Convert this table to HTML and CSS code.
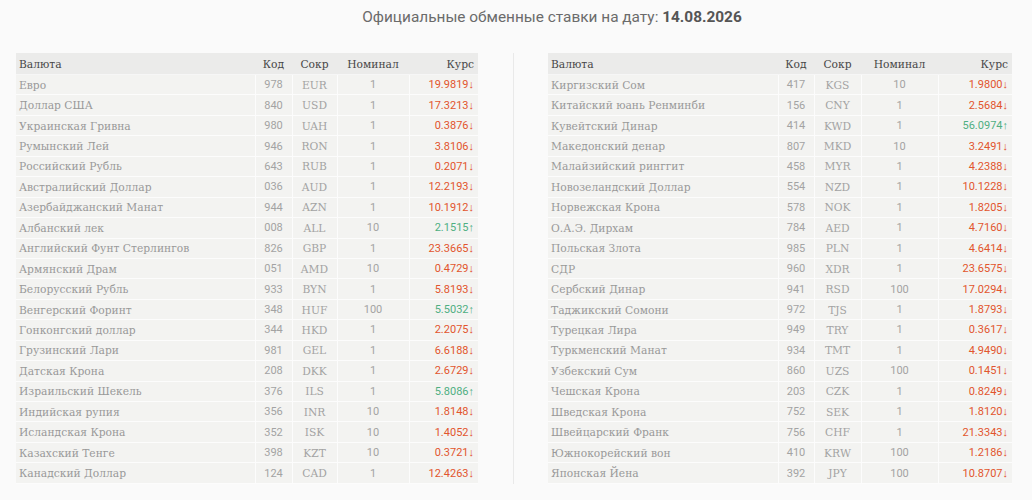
FILE: index.html
```html
<!DOCTYPE html>
<html lang="ru">
<head>
<meta charset="utf-8">
<title>Официальные обменные ставки</title>
<link rel="stylesheet" href="styles.css">
</head>
<body>
<h1 class="title">Официальные обменные ставки на дату: <b>14.08.2026</b></h1>
<div class="tables">
  <div class="col col-left">
    <table class="rates rates-left">
      <colgroup><col class="c-name"><col class="c-code"><col class="c-abbr"><col class="c-nom"><col class="c-rate"></colgroup>
      <thead><tr><th class="name">Валюта</th><th>Код</th><th>Сокр</th><th>Номинал</th><th class="rate">Курс</th></tr></thead>
      <tbody>
        <tr><td class="name">Евро</td><td class="num">978</td><td class="abbr">EUR</td><td class="num">1</td><td class="rate down">19.9819↓</td></tr>
        <tr><td class="name">Доллар США</td><td class="num">840</td><td class="abbr">USD</td><td class="num">1</td><td class="rate down">17.3213↓</td></tr>
        <tr><td class="name">Украинская Гривна</td><td class="num">980</td><td class="abbr">UAH</td><td class="num">1</td><td class="rate down">0.3876↓</td></tr>
        <tr><td class="name">Румынский Лей</td><td class="num">946</td><td class="abbr">RON</td><td class="num">1</td><td class="rate down">3.8106↓</td></tr>
        <tr><td class="name">Российский Рубль</td><td class="num">643</td><td class="abbr">RUB</td><td class="num">1</td><td class="rate down">0.2071↓</td></tr>
        <tr><td class="name">Австралийский Доллар</td><td class="num">036</td><td class="abbr">AUD</td><td class="num">1</td><td class="rate down">12.2193↓</td></tr>
        <tr><td class="name">Азербайджанский Манат</td><td class="num">944</td><td class="abbr">AZN</td><td class="num">1</td><td class="rate down">10.1912↓</td></tr>
        <tr><td class="name">Албанский лек</td><td class="num">008</td><td class="abbr">ALL</td><td class="num">10</td><td class="rate up">2.1515↑</td></tr>
        <tr><td class="name">Английский Фунт Стерлингов</td><td class="num">826</td><td class="abbr">GBP</td><td class="num">1</td><td class="rate down">23.3665↓</td></tr>
        <tr><td class="name">Армянский Драм</td><td class="num">051</td><td class="abbr">AMD</td><td class="num">10</td><td class="rate down">0.4729↓</td></tr>
        <tr><td class="name">Белорусский Рубль</td><td class="num">933</td><td class="abbr">BYN</td><td class="num">1</td><td class="rate down">5.8193↓</td></tr>
        <tr><td class="name">Венгерский Форинт</td><td class="num">348</td><td class="abbr">HUF</td><td class="num">100</td><td class="rate up">5.5032↑</td></tr>
        <tr><td class="name">Гонконгский доллар</td><td class="num">344</td><td class="abbr">HKD</td><td class="num">1</td><td class="rate down">2.2075↓</td></tr>
        <tr><td class="name">Грузинский Лари</td><td class="num">981</td><td class="abbr">GEL</td><td class="num">1</td><td class="rate down">6.6188↓</td></tr>
        <tr><td class="name">Датская Крона</td><td class="num">208</td><td class="abbr">DKK</td><td class="num">1</td><td class="rate down">2.6729↓</td></tr>
        <tr><td class="name">Израильский Шекель</td><td class="num">376</td><td class="abbr">ILS</td><td class="num">1</td><td class="rate up">5.8086↑</td></tr>
        <tr><td class="name">Индийская рупия</td><td class="num">356</td><td class="abbr">INR</td><td class="num">10</td><td class="rate down">1.8148↓</td></tr>
        <tr><td class="name">Исландская Крона</td><td class="num">352</td><td class="abbr">ISK</td><td class="num">10</td><td class="rate down">1.4052↓</td></tr>
        <tr><td class="name">Казахский Тенге</td><td class="num">398</td><td class="abbr">KZT</td><td class="num">10</td><td class="rate down">0.3721↓</td></tr>
        <tr><td class="name">Канадский Доллар</td><td class="num">124</td><td class="abbr">CAD</td><td class="num">1</td><td class="rate down">12.4263↓</td></tr>
      </tbody>
    </table>
  </div>
  <div class="col col-right">
    <table class="rates rates-right">
      <colgroup><col class="c-name"><col class="c-code"><col class="c-abbr"><col class="c-nom"><col class="c-rate"></colgroup>
      <thead><tr><th class="name">Валюта</th><th>Код</th><th>Сокр</th><th>Номинал</th><th class="rate">Курс</th></tr></thead>
      <tbody>
        <tr><td class="name">Киргизский Сом</td><td class="num">417</td><td class="abbr">KGS</td><td class="num">10</td><td class="rate down">1.9800↓</td></tr>
        <tr><td class="name">Китайский юань Ренминби</td><td class="num">156</td><td class="abbr">CNY</td><td class="num">1</td><td class="rate down">2.5684↓</td></tr>
        <tr><td class="name">Кувейтский Динар</td><td class="num">414</td><td class="abbr">KWD</td><td class="num">1</td><td class="rate up">56.0974↑</td></tr>
        <tr><td class="name">Македонский денар</td><td class="num">807</td><td class="abbr">MKD</td><td class="num">10</td><td class="rate down">3.2491↓</td></tr>
        <tr><td class="name">Малайзийский ринггит</td><td class="num">458</td><td class="abbr">MYR</td><td class="num">1</td><td class="rate down">4.2388↓</td></tr>
        <tr><td class="name">Новозеландский Доллар</td><td class="num">554</td><td class="abbr">NZD</td><td class="num">1</td><td class="rate down">10.1228↓</td></tr>
        <tr><td class="name">Норвежская Крона</td><td class="num">578</td><td class="abbr">NOK</td><td class="num">1</td><td class="rate down">1.8205↓</td></tr>
        <tr><td class="name">О.А.Э. Дирхам</td><td class="num">784</td><td class="abbr">AED</td><td class="num">1</td><td class="rate down">4.7160↓</td></tr>
        <tr><td class="name">Польская Злота</td><td class="num">985</td><td class="abbr">PLN</td><td class="num">1</td><td class="rate down">4.6414↓</td></tr>
        <tr><td class="name">СДР</td><td class="num">960</td><td class="abbr">XDR</td><td class="num">1</td><td class="rate down">23.6575↓</td></tr>
        <tr><td class="name">Сербский Динар</td><td class="num">941</td><td class="abbr">RSD</td><td class="num">100</td><td class="rate down">17.0294↓</td></tr>
        <tr><td class="name">Таджикский Сомони</td><td class="num">972</td><td class="abbr">TJS</td><td class="num">1</td><td class="rate down">1.8793↓</td></tr>
        <tr><td class="name">Турецкая Лира</td><td class="num">949</td><td class="abbr">TRY</td><td class="num">1</td><td class="rate down">0.3617↓</td></tr>
        <tr><td class="name">Туркменский Манат</td><td class="num">934</td><td class="abbr">TMT</td><td class="num">1</td><td class="rate down">4.9490↓</td></tr>
        <tr><td class="name">Узбекский Сум</td><td class="num">860</td><td class="abbr">UZS</td><td class="num">100</td><td class="rate down">0.1451↓</td></tr>
        <tr><td class="name">Чешская Крона</td><td class="num">203</td><td class="abbr">CZK</td><td class="num">1</td><td class="rate down">0.8249↓</td></tr>
        <tr><td class="name">Шведская Крона</td><td class="num">752</td><td class="abbr">SEK</td><td class="num">1</td><td class="rate down">1.8120↓</td></tr>
        <tr><td class="name">Швейцарский Франк</td><td class="num">756</td><td class="abbr">CHF</td><td class="num">1</td><td class="rate down">21.3343↓</td></tr>
        <tr><td class="name">Южнокорейский вон</td><td class="num">410</td><td class="abbr">KRW</td><td class="num">100</td><td class="rate down">1.2186↓</td></tr>
        <tr><td class="name">Японская Йена</td><td class="num">392</td><td class="abbr">JPY</td><td class="num">100</td><td class="rate down">10.8707↓</td></tr>
      </tbody>
    </table>
  </div>
</div>
</body>
</html>
```
FILE: styles.css
```css
html, body {
  margin: 0;
  padding: 0;
  background: #fafafa;
}
body {
  padding-top: 7px;
  font-family: "DejaVu Serif Condensed", "DejaVu Serif", serif;
}
.title {
  margin: 0 0 26px 0;
  padding-left: 72px;
  text-align: center;
  font-family: Roboto, "Noto Sans", sans-serif;
  font-stretch: normal;
  font-weight: 400;
  font-size: 15.4px;
  line-height: 20px;
  color: #6b6b6b;
}
.title b {
  font-weight: 700;
  color: #555;
}
.tables {
  display: flex;
  padding-left: 16px;
}
.col-left {
  padding-right: 35px;
}
.col-right {
  border-left: 1px solid #e9e9e9;
  padding-left: 34px;
}
.rates {
  border-collapse: collapse;
  table-layout: fixed;
  font-size: 11.9px;
  font-stretch: condensed;
}
.rates-left { width: 462px; }
.rates-right { width: 464px; }
.rates-left .c-name { width: 239px; }
.rates-left .c-code { width: 37px; }
.rates-left .c-abbr { width: 45px; }
.rates-left .c-nom { width: 72px; }
.rates-left .c-rate { width: 69px; }
.rates-right .c-name { width: 230px; }
.rates-right .c-code { width: 36px; }
.rates-right .c-abbr { width: 47px; }
.rates-right .c-nom { width: 77px; }
.rates-right .c-rate { width: 74px; }
.rates th {
  background: #ebebea;
  color: #474747;
  font-weight: 400;
  height: 21px;
  padding: 0 4px;
  text-align: center;
  border-bottom: 1px solid #f6f6f6;
  white-space: nowrap;
}
.rates td {
  background: #f3f3f1;
  height: 19.45px;
  padding: 0 4px;
  text-align: center;
  color: #a3a3a3;
  border: 1px solid #fcfcfc;
  border-top: none;
  white-space: nowrap;
  overflow: hidden;
}
.rates td:first-child { border-left: none; }
.rates td:last-child { border-right: none; }
.rates th.name, .rates td.name {
  text-align: left;
  padding-left: 3px;
}
.rates td.name { color: #999; }
.rates th.rate, .rates td.rate {
  text-align: right;
  padding-right: 4px;
}
.rates td.num, .rates td.rate {
  font-family: Roboto, "Noto Sans", sans-serif;
  font-stretch: normal;
  font-size: 11px;
}
.rates td.down { color: #e2552d; }
.rates td.up { color: #4faf82; }
```
